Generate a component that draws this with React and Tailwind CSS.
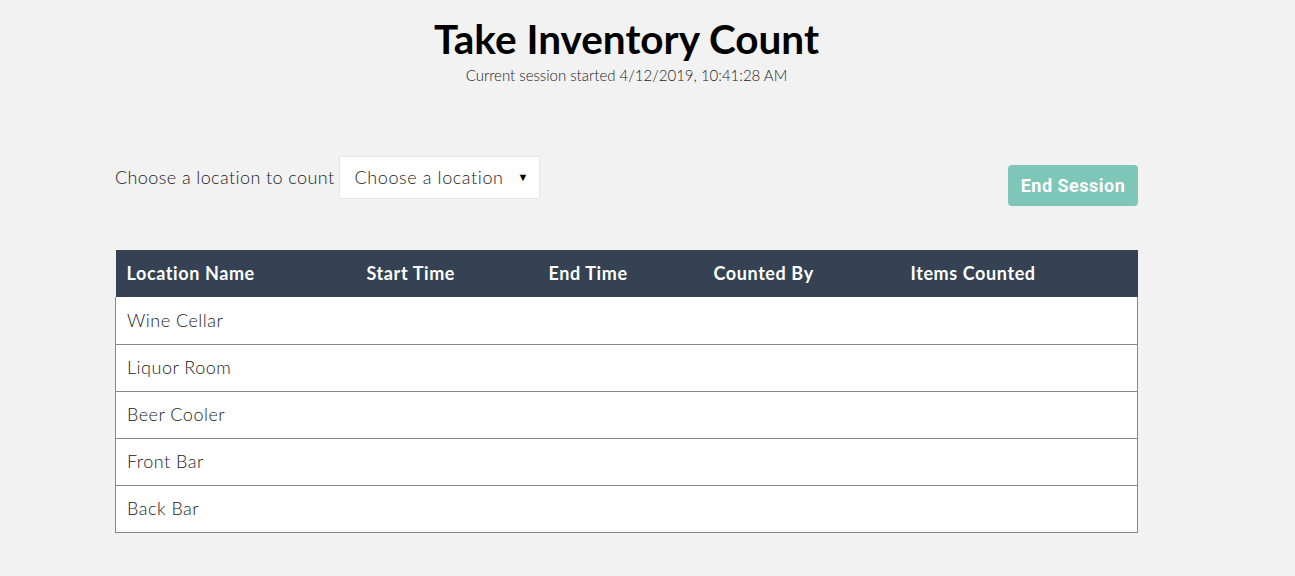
import React from 'react';

const columns = [
  { label: 'Location Name', w: 'w-[240px]' },
  { label: 'Start Time', w: 'w-[182px]' },
  { label: 'End Time', w: 'w-[165px]' },
  { label: 'Counted By', w: 'w-[197px]' },
  { label: 'Items Counted', w: '' },
];

const locations = ['Wine Cellar', 'Liquor Room', 'Beer Cooler', 'Front Bar', 'Back Bar'];

export default function App() {
  return (
    <div className="min-h-[576px] bg-[#f2f2f2] font-['Lato','Liberation_Sans',sans-serif] text-[#333]">
      <div className="w-[1023px] ml-[115px]">
        {/* page title */}
        <div className="flex flex-col items-center pt-[13px]">
          <h1 className="text-[40.5px] font-bold leading-[52px] text-black">Take Inventory Count</h1>
          <p className="text-[15px] font-light leading-[18px] mt-[1px] text-[#222]">Current session started 4/12/2019, 10:41:28 AM</p>
        </div>

        {/* controls */}
        <div className="flex items-start justify-between mt-[72px]">
          <div className="flex items-center">
            <span className="text-[18px] font-light tracking-[0.4px] mr-[5px] text-[#222]">Choose a location to count</span>
            <div className="w-[201px] h-[43px] bg-white border border-[#e6e6e6] flex items-center justify-between pl-[14px] pr-[11px]">
              <span className="text-[18px] font-light tracking-[0.6px] text-[#222]">Choose a location</span>
              <span className="text-[11px] text-black">▼</span>
            </div>
          </div>
          <button className="mt-[9px] w-[130px] h-[41px] rounded-[4px] bg-[#7dc6b8] text-white text-[18px] font-bold tracking-[0.5px] font-['Roboto',sans-serif]">
            End Session
          </button>
        </div>

        {/* table */}
        <table className="mt-[44px] w-full border-collapse table-fixed">
          <thead>
            <tr className="bg-[#344253] h-[47px]">
              {columns.map((c) => (
                <th key={c.label} className={`${c.w} text-left px-[11px] text-white text-[18px] font-bold tracking-[0.6px]`}>{c.label}</th>
              ))}
            </tr>
          </thead>
          <tbody className="bg-white">
            {locations.map((loc) => (
              <tr key={loc} className="h-[47px] border border-[#888] border-t-0">
                <td className="px-[11px] text-[18px] font-light tracking-[0.5px] text-[#222]">{loc}</td>
                <td></td>
                <td></td>
                <td></td>
                <td></td>
              </tr>
            ))}
          </tbody>
        </table>
      </div>
    </div>
  );
}
